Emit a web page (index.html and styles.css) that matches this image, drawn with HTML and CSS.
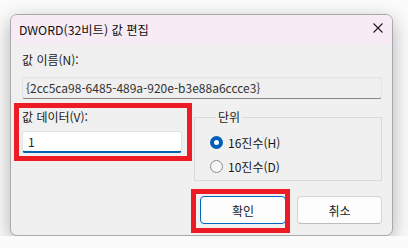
FILE: index.html
```html
<!DOCTYPE html>
<html lang="ko">
<head>
  <meta charset="UTF-8">
  <title>DWORD(32비트) 값 편집</title>
  <link rel="stylesheet" href="styles.css">
</head>
<body>
  <div class="dialog">
    <div class="titlebar">
      <span class="title">DWORD(32비트) 값 편집</span>
      <svg class="close" width="10" height="10" viewBox="0 0 10 10">
        <path d="M0.5 0.5L9.5 9.5M9.5 0.5L0.5 9.5" stroke="#1b1b1b" stroke-width="1.1" fill="none"/>
      </svg>
    </div>

    <div class="content">
      <div class="label">값 이름(N):</div>
      <div class="name_box">{2cc5ca98-6485-489a-920e-b3e88a6ccce3}</div>

      <div class="row">
        <div class="data">
          <div class="label">값 데이터(V):</div>
          <div class="data_input">1</div>
        </div>
        <fieldset class="unit">
          <legend>단위</legend>
          <div class="radio checked"><span class="dot"></span>16진수(H)</div>
          <div class="radio"><span class="dot"></span>10진수(D)</div>
        </fieldset>
      </div>

      <div class="buttons">
        <div class="btn primary">확인</div>
        <div class="btn">취소</div>
      </div>
    </div>

    <!-- red annotation boxes -->
    <div class="mark mark_data"></div>
    <div class="mark mark_ok"></div>
  </div>
</body>
</html>
```

FILE: styles.css
```css
body {
  margin: 0;
  padding: 14px 0 0 10px;
  background: #fbfbfb;
  font-family: 'Noto Sans CJK KR', sans-serif;
  font-size: 12px;
  color: #1a1a1a;
}

.dialog {
  position: relative;
  width: 383px;
  height: 222px;
  box-sizing: border-box;
  background: #f0f0f0;
  border: 1px solid #a9a9a9;
  border-radius: 7px;
  box-shadow: 0 6px 20px rgba(0, 0, 0, .3);
  overflow: hidden;
}

.titlebar {
  height: 29px;
  background: #f7ecf5;
  display: flex;
  align-items: center;
  justify-content: space-between;
  padding: 0 9px 0 8px;
}
.titlebar .title {font-size: 12.3px; line-height: 16px; color: #111;}
.titlebar .close {margin-top: -3px;}

.content {
  padding: 8px 10px 0 11px;
}

.label {
  line-height: 16px;
  height: 16px;
}

.name_box {
  margin-top: 9px;
  height: 22px;
  box-sizing: border-box;
  border: 1px solid #e4e4e4;
  border-bottom-color: #868686;
  border-radius: 3px;
  background: #efefef;
  color: #333;
  line-height: 20px;
  padding-left: 3px;
  white-space: nowrap;
  overflow: hidden;
}

.row {
  display: flex;
  gap: 12px;
  margin-top: 10px;
}

.data {width: 161px;}
.data_input {
  margin-top: 6px;
  height: 22px;
  box-sizing: border-box;
  background: #fff;
  border: 1px solid #e2e2e2;
  border-bottom: 2px solid #0062b5;
  border-radius: 3px;
  padding-left: 5px;
  line-height: 19px;
  color: #222;
}

.unit {
  margin: 0;
  width: 189px;
  height: 72px;
  box-sizing: border-box;
  border: 1px solid #dadada;
  padding: 5px 0 0 15px;
}
.unit legend {
  padding: 0 2px;
  margin-left: 6px;
  line-height: 16px;
}

.radio {
  display: flex;
  align-items: center;
  gap: 5px;
  height: 24px;
}
.radio .dot {
  width: 13px;
  height: 13px;
  box-sizing: border-box;
  border-radius: 50%;
  border: 1px solid #8a8a8a;
  background: #f6f6f6;
}
.radio.checked .dot {
  border: 4px solid #005fb8;
  background: #fff;
}

.buttons {
  display: flex;
  justify-content: flex-end;
  gap: 11px;
  margin-top: 15px;
}
.btn {
  width: 85px;
  height: 28px;
  box-sizing: border-box;
  border: 1px solid #d4d4d4;
  border-bottom-color: #bcbcbc;
  border-radius: 4px;
  background: #fdfdfd;
  display: flex;
  align-items: center;
  justify-content: center;
}
.btn.primary {
  width: 86px;
  border: 1px solid #0067c0;
  box-shadow: inset 0 0 0 1px #fff;
}

.mark {
  position: absolute;
  border: 5px solid #ed1c24;
}
.mark_data {left: 3px; top: 88px; width: 168px; height: 48px;}
.mark_ok {left: 180px; top: 174px; width: 89px; height: 34px;}
```
